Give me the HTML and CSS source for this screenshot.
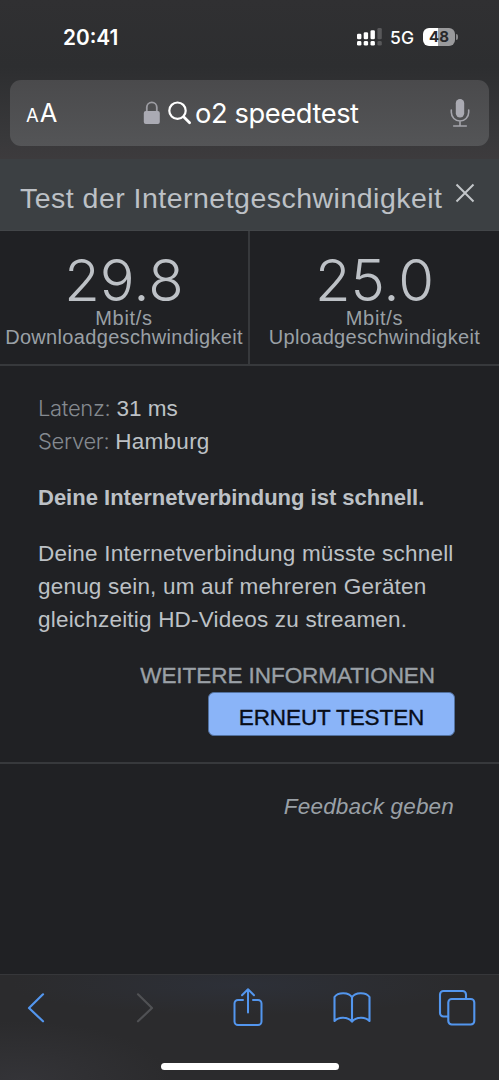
FILE: index.html
```html
<!DOCTYPE html>
<html lang="de">
<head>
<meta charset="utf-8">
<title>o2 speedtest</title>
<link rel="stylesheet" href="styles.css">
</head>
<body>
<div class="phone">
  <header class="chrome">
    <div class="status">
      <span class="time">20:41</span>
      <div class="indicators">
        <svg class="signal" width="26" height="18" viewBox="0 0 26 18" fill="#fff">
          <rect x="0" y="5.7" width="4.4" height="5.6" rx="1.3"/><rect x="0" y="13" width="4.4" height="4.6" rx="1.4"/>
          <rect x="6.7" y="4.2" width="4.4" height="7.1" rx="1.3"/><rect x="6.7" y="13" width="4.4" height="4.6" rx="1.4"/>
          <rect x="13.5" y="2.2" width="4.4" height="9.1" rx="1.3"/><rect x="13.5" y="13" width="4.4" height="4.6" rx="1.4"/>
          <g fill="#58585a"><rect x="20.4" y="0" width="4.4" height="11.3" rx="1.3"/><rect x="20.4" y="13" width="4.4" height="4.6" rx="1.4"/></g>
        </svg>
        <span class="network">5G</span>
        <div class="battery"><span class="level">48</span><span class="nub"></span></div>
      </div>
    </div>
    <div class="search">
      <span class="size"><span class="size-small">A</span><span class="size-large">A</span></span>
      <svg class="lock" width="18" height="24" viewBox="0 0 18 24">
        <path d="M3.800 11V6.300a5 5 0 0 1 10 0V11" fill="none" stroke="#9d9da3" stroke-width="1.800"/>
        <rect x=".8" y="10" width="16" height="13" rx="2" fill="#aaaab3"/>
      </svg>
      <svg class="lens" width="24" height="24" viewBox="0 0 24 24" fill="none" stroke="#fff" stroke-linecap="round">
        <circle cx="9.500" cy="9.700" r="8.200" stroke-width="2.200"/><path d="M15.600 15.800l6 6" stroke-width="2.800"/>
      </svg>
      <span class="query">o2 speedtest</span>
      <svg class="mic" width="20" height="30" viewBox="0 0 20 30" fill="none" stroke="#a4a4ab" stroke-width="1.600" stroke-linecap="round">
        <rect x="5.800" y="1" width="8.400" height="18.500" rx="4.200" fill="#aaaab2" stroke="none"/>
        <path d="M1.300 12v2.300a8.700 8.700 0 0 0 17.400 0V12M10 23v5M3.700 28h12.600"/>
      </svg>
    </div>
  </header>

  <main class="page">
    <div class="title-bar">
      <h1>Test der Internetgeschwindigkeit</h1>
      <svg class="close" width="20" height="20" viewBox="0 0 20 20" fill="none" stroke="#c3c6ca" stroke-width="2"><path d="M1.500 1.500l17 17M18.500 1.500l-17 17"/></svg>
    </div>
    <section class="results">
      <div class="result"><span class="value">29.8</span><span class="unit">Mbit/s</span><span class="label download">Downloadgeschwindigkeit</span></div>
      <div class="result"><span class="value">25.0</span><span class="unit">Mbit/s</span><span class="label upload">Uploadgeschwindigkeit</span></div>
    </section>
    <section class="details">
      <div class="fact"><span class="key latency">Latenz:</span> <span class="ms">31 ms</span></div>
      <div class="fact"><span class="key server">Server:</span> <span class="city">Hamburg</span></div>
      <h2>Deine Internetverbindung ist schnell.</h2>
      <p>Deine Internetverbindung müsste schnell<br>genug sein, um auf mehreren Geräten<br>gleichzeitig HD-Videos zu streamen.</p>
      <div class="actions">
        <a class="more">WEITERE INFORMATIONEN</a>
        <button class="again">ERNEUT TESTEN</button>
      </div>
    </section>
    <div class="feedback"><span>Feedback geben</span></div>
  </main>

  <footer class="toolbar">
    <nav class="tools">
      <svg class="back" width="20" height="32" viewBox="0 0 20 32" fill="none" stroke="#5396ee" stroke-width="2.200" stroke-linecap="round" stroke-linejoin="round"><path d="M17 2.300L3 16l14 13.300"/></svg>
      <svg class="forward" width="20" height="32" viewBox="0 0 20 32" fill="none" stroke="#505154" stroke-width="2.200" stroke-linecap="round" stroke-linejoin="round"><path d="M3 2.300L17 16 3 29.300"/></svg>
      <svg class="share" width="34" height="40" viewBox="0 0 34 40" fill="none" stroke="#5396ee" stroke-width="2" stroke-linecap="round" stroke-linejoin="round"><path d="M12 13H7a3.500 3.500 0 0 0-3.500 3.500v18A3.500 3.500 0 0 0 7 38h20a3.500 3.500 0 0 0 3.500-3.500v-18A3.500 3.500 0 0 0 27 13h-5M17 25.500V2.200M11 8.200l6-6 6 6"/></svg>
      <svg class="books" width="40" height="34" viewBox="0 0 40 34" fill="none" stroke="#5396ee" stroke-width="2.100" stroke-linejoin="round"><path d="M20 6.300C17 1 6 .8 2.500 6v24c4-4.500 13.500-4.500 17.500.7 4-5.200 13.500-5.200 17.500-.7V6C34 .8 23 1 20 6.300zV31"/></svg>
      <svg class="tabs" width="38" height="38" viewBox="0 0 38 38" fill="none" stroke="#5396ee" stroke-width="2.100"><path d="M10 27.500H5.500A3.500 3.500 0 0 1 2 24V5.500A3.500 3.500 0 0 1 5.500 2H24.500A3.500 3.500 0 0 1 28 5.500V10"/><rect x="10.300" y="10" width="26" height="25.500" rx="3.500"/></svg>
    </nav>
    <div class="home"></div>
  </footer>
</div>
</body>
</html>
```
FILE: styles.css
```css
* { box-sizing: border-box; }
body { margin: 0; background: #202124; }
.phone {
  width: 499px; height: 1080px; overflow: hidden;
  display: flex; flex-direction: column;
  background: #202124;
  font-family: "Liberation Sans", Arial, sans-serif;
}
svg { display: block; flex: none; }
span, a, h1, h2, p, button { white-space: nowrap; }

/* Browser chrome */
.chrome {
  height: 159px; flex: none;
  background: linear-gradient(#303032, #2d2e30 42%, #39393b 88%, #3d3b3d);
  font-family: Inter, sans-serif; color: #fff;
}
.status { height: 80px; padding: 0 44px 0 63px; display: flex; justify-content: space-between; align-items: flex-start; }
.time { margin-top: 25px; font-size: 20.8px; line-height: 25px; font-weight: 600; }
.indicators { display: flex; margin-top: 28px; }
.network { margin-left: 7px; font-size: 17.5px; line-height: 20px; font-weight: 500; }
.battery {
  position: relative; width: 32px; height: 18px; margin: 0 0 0 9px; border-radius: 6px;
  background: linear-gradient(90deg, #fff 48%, #9a9a9c 48%);
  color: #28282a; text-align: center;
}
.level { display: block; font-size: 15px; line-height: 18px; font-weight: 700; }
.nub { position: absolute; left: 33px; top: 6px; width: 2px; height: 6px; border-radius: 0 2px 2px 0; background: #88888a; }
.search {
  height: 66px; margin: 0 10px; padding: 0 19px 0 16px; border-radius: 11px;
  display: flex; align-items: center;
  background: linear-gradient(#4a4a4c, #545557);
}
.size { width: 117px; padding-top: 2px; display: flex; align-items: baseline; line-height: 30px; }
.size-small { font-size: 18.5px; }
.size-large { font-size: 25.5px; margin-left: 1px; }
.lens { margin-left: 7px; }
.query { flex: 1; margin-left: 3px; padding-top: 2px; font-size: 27.3px; line-height: 34px; letter-spacing: -.42px; }

/* Page */
.page { flex: 1; display: flex; flex-direction: column; color: #bdc1c6; }
.title-bar {
  height: 72px; padding: 0 24px 0 20px; display: flex; justify-content: space-between;
  background: #3c4043; border-bottom: 1px solid #434649;
}
h1 { margin: 22px 0 0; font-size: 28.5px; line-height: 34px; font-weight: 400; letter-spacing: .48px; }
.close { margin-top: 24px; }
.results { height: 135px; display: grid; grid-template-columns: 248px 251px; border-bottom: 2px solid #37393c; }
.result { display: flex; flex-direction: column; align-items: center; }
.result + .result { border-left: 2px solid #37393c; }
.value { margin-top: 17px; font: 300 58px/64px Inter, sans-serif; }
.unit, .label { color: #9aa0a6; font-size: 20px; line-height: 19px; letter-spacing: .33px; }
.unit { margin-top: -3px; letter-spacing: .7px; }
.details { height: 398px; padding: 26px 38px 0; border-bottom: 2px solid #37393c; font-size: 22.5px; line-height: 33px; }
.fact { height: 33px; display: flex; gap: 6px; }
.key { color: #858a90; font-family: Inter, sans-serif; font-weight: 300; font-size: 22px; letter-spacing: -.32px; }
.city { letter-spacing: .25px; }
h2 { margin: 23px 0 0; font-size: 22px; line-height: 34px; font-weight: 700; }
p { margin: 22px 0 0; letter-spacing: .2px; line-height: 33px; }
.actions { margin-top: 23px; padding-right: 6px; display: flex; flex-direction: column; align-items: flex-end; }
.more { height: 33px; margin-right: 20px; color: #9aa0a6; font-size: 22.5px; line-height: 34px; letter-spacing: -.05px; -webkit-text-stroke: .35px #9aa0a6; }
.again {
  width: 247px; height: 44px; padding: 8px 0 0; border: 1px solid #52719f; border-radius: 6px;
  background: #8ab4f8; color: #080d18; -webkit-text-stroke: .35px #080d18;
  font: 400 22.5px/34px "Liberation Sans", Arial, sans-serif; letter-spacing: -.1px;
}
.feedback { padding: 26px 45px 0 0; text-align: right; font-size: 22.5px; line-height: 33px; font-style: italic; letter-spacing: .18px; color: #9aa0a6; }

/* Bottom toolbar */
.toolbar {
  height: 106px; flex: none; display: flex; flex-direction: column; align-items: center;
  border-top: 1px solid #36373a;
  background: radial-gradient(ellipse 230px 30px at 240px 10px, #2d3038, transparent), radial-gradient(ellipse 150px 60px at 20px 106px, #343438, transparent), #2b2b2d;
}
.tools { width: 100%; height: 66px; padding-left: 26px; display: flex; align-items: center; }
.forward { margin-left: 89px; }
.share { margin: 0 0 3px 75.5px; }
.books { margin-left: 67.5px; }
.tabs { margin-left: 65.5px; }
.home { width: 178px; height: 7px; margin-top: 22px; border-radius: 4px; background: #fff; }
```
